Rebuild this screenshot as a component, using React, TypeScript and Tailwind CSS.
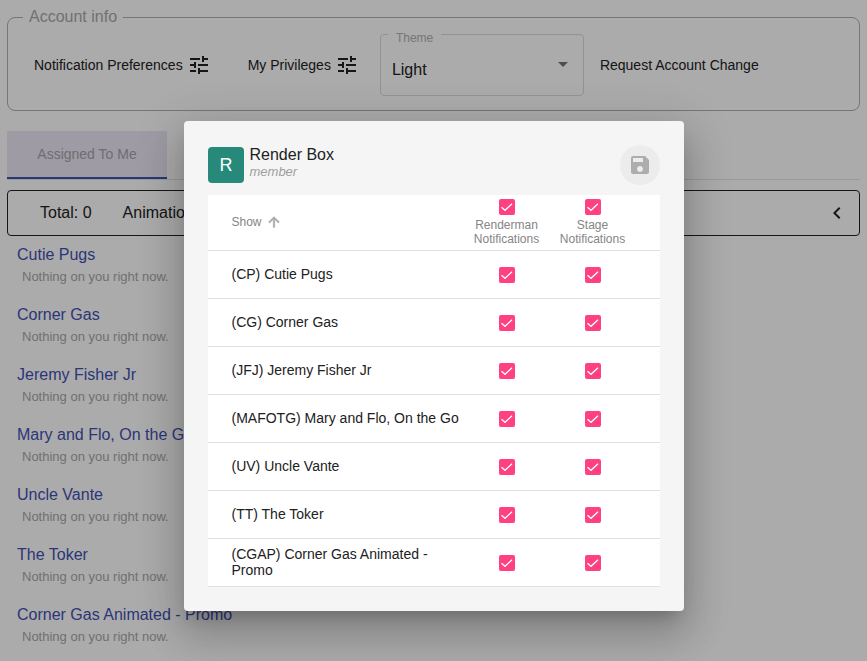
import { MdTune, MdSave, MdChevronLeft, MdArrowDropDown } from "react-icons/md";

const SHOWS = [
  { code: "CP", name: "Cutie Pugs" },
  { code: "CG", name: "Corner Gas" },
  { code: "JFJ", name: "Jeremy Fisher Jr" },
  { code: "MAFOTG", name: "Mary and Flo, On the Go" },
  { code: "UV", name: "Uncle Vante" },
  { code: "TT", name: "The Toker" },
  { code: "CGAP", name: "Corner Gas Animated - Promo" },
];

function Check() {
  return (
    <span className="flex h-[16px] w-[16px] items-center justify-center rounded-[2px] bg-[#ff4081]">
      <svg viewBox="0 0 16 16" className="h-[16px] w-[16px]" fill="none" stroke="white" strokeWidth="1.3">
        <path d="M2.5 8.2 L6 11.3 L13 4.8" />
      </svg>
    </span>
  );
}

export default function App() {
  return (
    <div className="relative h-[661px] overflow-hidden bg-white font-['Liberation_Sans',Arial,sans-serif] text-[#212121]">
      {/* Account info */}
      <div className="px-[7px] pt-[8px]">
        <fieldset className="h-[103px] rounded-[8px] border border-[#b0b0b0] pl-[15px]">
          <legend className="px-[6px] text-[16px] leading-[18px] text-[#a8a8a8]">Account info</legend>
          <div className="flex items-start">
            <div className="mt-[27px] flex h-[24px] items-center pl-[11px] text-[14px]">
              Notification Preferences
              <MdTune className="ml-[4px] h-[24px] w-[24px]" />
            </div>
            <div className="ml-[37px] mt-[27px] flex h-[24px] items-center text-[14px]">
              My Privileges
              <MdTune className="ml-[4px] h-[24px] w-[24px]" />
            </div>
            <fieldset className="ml-[21px] mt-[4px] h-[66px] w-[204px] rounded-[4px] border border-[#dcdcdc] pl-[7px]">
              <legend className="h-[8px] px-[8px] pt-[1px] text-[12px] leading-[14px] text-[#b0b0b0]">Theme</legend>
              <div className="flex h-[57px] items-center justify-between pl-[4px] pr-[8px] pt-[7px] text-[16px]">
                Light
                <MdArrowDropDown className="mb-[12px] h-[24px] w-[24px] text-[#757575]" />
              </div>
            </fieldset>
            <div className="ml-[16px] mt-[27px] flex h-[24px] items-center text-[14px]">Request Account Change</div>
          </div>
        </fieldset>
      </div>

      {/* Tabs */}
      <div className="mx-[7px] mt-[20px] border-b border-[#e5e5e5]">
        <div className="flex h-[48px] w-[160px] items-center justify-center border-b-2 border-[#3f51b5] bg-[#ece8f6] text-[14px] text-[#a4a4a4]">
          Assigned To Me
        </div>
      </div>

      {/* Totals */}
      <div className="mx-[7px] mt-[10px] flex h-[46px] items-center rounded-[4px] border border-[#212121] pl-[32px] pr-[10px] text-[16px]">
        <span>Total: 0</span>
        <span className="ml-[31px]">Animations: 0</span>
        <MdChevronLeft className="ml-auto h-[24px] w-[24px]" />
      </div>

      {/* Show list */}
      <div className="mt-[7px] pl-[17px]">
        {SHOWS.map((s) => (
          <div key={s.code} className="h-[60px] pt-[2px]">
            <div className="text-[16px] leading-[20px] text-[#3f51b5]">{s.name}</div>
            <div className="mt-[4px] pl-[5px] text-[13px] leading-[16px] text-[#a8a8a8]">Nothing on you right now.</div>
          </div>
        ))}
      </div>

      {/* Dialog */}
      <div className="absolute inset-0 bg-black/33 pl-[184px] pt-[121px]">
        <div className="w-[500px] rounded-[4px] bg-[#f5f5f5] px-[24px] pb-[24px] pt-[24px] shadow-[0_11px_15px_-7px_rgba(0,0,0,0.2),0_24px_38px_3px_rgba(0,0,0,0.14),0_9px_46px_8px_rgba(0,0,0,0.12)]">
          <div className="flex h-[50px] items-start">
            <div className="mt-[2px] flex h-[36px] w-[36px] items-center justify-center rounded-[4px] bg-[#26897a] text-[18px] text-white">
              R
            </div>
            <div className="ml-[5.5px]">
              <div className="text-[16px] leading-[20px]">Render Box</div>
              <div className="text-[13px] italic leading-[14px] text-[#9e9e9e]">member</div>
            </div>
            <div className="ml-auto flex h-[40px] w-[40px] items-center justify-center rounded-full bg-[#ececec]">
              <MdSave className="h-[24px] w-[24px] text-[#adadad]" />
            </div>
          </div>

          <div className="bg-white">
            <div className="flex h-[56px] border-b border-[#e0e0e0]">
              <div className="flex w-[256px] items-center pb-[2px] pl-[23.5px] text-[12px] text-[#858585]">
                Show
                <svg viewBox="0 0 24 24" className="ml-[4px] h-[16px] w-[16px] text-[#a8a8a8]" fill="currentColor" stroke="currentColor" strokeWidth="1">
                  <path d="M4 12l1.41 1.41L11 7.83V20h2V7.83l5.58 5.59L20 12l-8-8-8 8z" />
                </svg>
              </div>
              {["Renderman", "Stage"].map((label) => (
                <div key={label} className="flex w-[86px] flex-col items-center pt-[4px] text-center text-[12px] leading-[14px] text-[#858585]">
                  <Check />
                  <span className="-translate-x-[0.5px] pt-[3px]">{label}</span>
                  <span className="-translate-x-[0.5px]">Notifications</span>
                </div>
              ))}
            </div>
            {SHOWS.map((s) => (
              <div key={s.code} className="flex h-[48px] items-center border-b border-[#e0e0e0]">
                <div className="w-[256px] pb-[2px] pl-[23.5px] pr-[4px] text-[14px] leading-[16px]">
                  {`(${s.code}) ${s.name}`}
                </div>
                <div className="flex w-[86px] justify-center">
                  <Check />
                </div>
                <div className="flex w-[86px] justify-center">
                  <Check />
                </div>
              </div>
            ))}
          </div>
        </div>
      </div>
    </div>
  );
}
